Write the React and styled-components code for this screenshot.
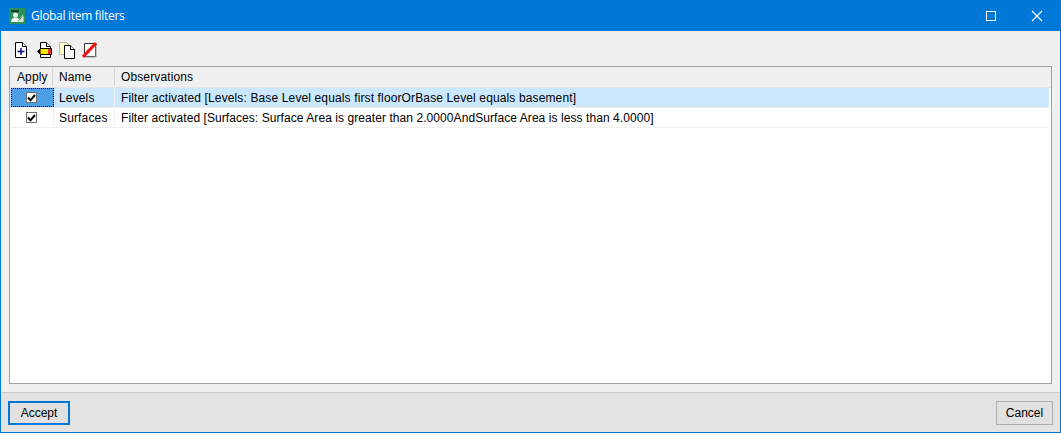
import React from 'react'
import styled, { createGlobalStyle } from 'styled-components'

const GlobalStyle = createGlobalStyle`
    html, body {
        margin: 0;
        padding: 0;
        background: #f0f0f0;
    }
    * {
        box-sizing: border-box;
    }
`

const rows = [
    {
        name: 'Levels',
        observations: 'Filter activated [Levels: Base Level equals first floorOrBase Level equals basement]',
        tracking: '0.13px',
        selected: true,
    },
    {
        name: 'Surfaces',
        observations: 'Filter activated [Surfaces: Surface Area is greater than 2.0000AndSurface Area is less than 4.0000]',
        tracking: '0.07px',
    },
]

const AppIcon = () => (
    <svg width="16" height="16" viewBox="0 0 16 16">
        <rect width="16" height="16" fill="#2a9458" />
        <path d="M2 2h8v2H2z" fill="#123f26" />
        <path d="M6 3l2 1v3H5z" fill="#123f26" />
        <circle cx="6.500" cy="7" r="2.500" fill="#f2f6f2" />
        <path d="M2 14c0-3 2-4.500 4.500-4.500S11 11 11 14z" fill="#f2f6f2" />
        <path d="M8 14l5.500-7 1 1V14z" fill="#dce8de" />
        <path d="M9.500 13l4-5" stroke="#5f8a6d" />
    </svg>
)

const NewIcon = () => (
    <svg width="12" height="16" viewBox="0 0 12 16">
        <path d="M.5 .5h7l4 4v11H.5z" fill="#fff" stroke="#000" />
        <path d="M7.500 .5v4h4" fill="#fff" stroke="#000" />
        <path d="M6 6v7M2.500 9.500h7" stroke="#00008b" strokeWidth="1.400" />
    </svg>
)

const EditIcon = () => (
    <svg width="16" height="16" viewBox="-1 0 16 16">
        <path d="M3.500 .5h6l4 4v11h-10z" fill="#fff" stroke="#000" />
        <path d="M9.500 .5v4h4" fill="#fff" stroke="#000" />
        <path d="M.5 9.500l3-3h11v6h-11z" fill="#ffe600" stroke="#000" />
        <path d="M.5 9.500l3-3v6z" fill="#000" />
        <path d="M11 7h3v5h-3z" fill="#e0362c" />
    </svg>
)

const CopyIcon = () => (
    <svg width="16" height="17" viewBox="0 0 16 17">
        <path d="M.5 .5h7l3 3v9H.5z" fill="#ffffc8" stroke="#808080" strokeDasharray="1 1" />
        <path d="M5.500 3.500h6l4 4v9h-10z" fill="#fff" stroke="#000" />
        <path d="M11.500 3.500v4h4" fill="#fff" stroke="#000" />
    </svg>
)

const DeleteIcon = () => (
    <svg width="15" height="16" viewBox="0 0 15 16">
        <path d="M2.500 1.500h11v13h-11z" fill="#fff" stroke="#333" />
        <path d="M14 2.500v12.500H3" fill="none" stroke="#999" />
        <path d="M1 15L14 1" stroke="#f01010" strokeWidth="3" />
    </svg>
)

const CheckMark = () => (
    <svg width="9" height="8" viewBox="0 0 9 8">
        <path d="M1 3.500l2.500 2.800L8 1" fill="none" stroke="#000" strokeWidth="2" />
    </svg>
)

const App = () => (
    <Window>
        <GlobalStyle />
        <TitleBar>
            <TitleIcon><AppIcon /></TitleIcon>
            <Title>Global item filters</Title>
            <WindowControls>
                <MinimizeGlyph />
                <MaximizeGlyph />
                <CloseGlyph>
                    <svg width="12" height="12" viewBox="0 0 12 12">
                        <path d="M1 1l10 10M11 1L1 11" stroke="#fff" strokeWidth="1.200" />
                    </svg>
                </CloseGlyph>
            </WindowControls>
        </TitleBar>
        <Toolbar>
            <ToolButton><NewIcon /></ToolButton>
            <ToolButton><EditIcon /></ToolButton>
            <ToolButton><CopyIcon /></ToolButton>
            <ToolButton><DeleteIcon /></ToolButton>
        </Toolbar>
        <TableBox>
            <HeaderRow>
                <HeaderCell $column="apply">Apply</HeaderCell>
                <HeaderCell $column="name">Name</HeaderCell>
                <HeaderCell>Observations</HeaderCell>
            </HeaderRow>
            {rows.map(row => (
                <Row key={row.name} $selected={row.selected}>
                    <CheckCell $selected={row.selected}>
                        <CheckBox><CheckMark /></CheckBox>
                    </CheckCell>
                    <Cell $column="name">{row.name}</Cell>
                    <Cell $tracking={row.tracking}>{row.observations}</Cell>
                </Row>
            ))}
        </TableBox>
        <Footer>
            <Button $primary>Accept</Button>
            <Button>Cancel</Button>
        </Footer>
    </Window>
)

const columnWidth = column => {
    if (column === 'apply') return '43px'
    if (column === 'name') return '62px'
    return 'auto'
}

const Window = styled.div`
    width: 1061px;
    height: 433px;
    display: flex;
    flex-direction: column;
    background: #f0f0f0;
    border: 1px solid #0078d7;
    border-top: 0;
    font-family: "Liberation Sans", Arial, sans-serif;
    font-size: 12px;
    color: #000;
    overflow: hidden;
`
const TitleBar = styled.div`
    height: 31px;
    flex: none;
    display: flex;
    align-items: center;
    padding-left: 8px;
    background: #0078d7;
    color: #fff;
`
const TitleIcon = styled.div`
    width: 16px;
    height: 16px;
    margin-right: 6px;
    display: flex;
`
const Title = styled.div`
    font-family: "Open Sans", "Noto Sans", sans-serif;
    font-size: 12px;
    letter-spacing: -0.3px;
`
const WindowControls = styled.div`
    margin-left: auto;
    display: flex;
    align-items: center;
`
const MinimizeGlyph = styled.div`
    width: 46px;
    height: 31px;
`
const MaximizeGlyph = styled.div`
    width: 10px;
    height: 10px;
    margin: 0 18px;
    border: 1px solid #fff;
`
const CloseGlyph = styled.div`
    width: 46px;
    display: flex;
    justify-content: center;
    padding-right: 1px;
`
const Toolbar = styled.div`
    height: 35px;
    flex: none;
    display: flex;
    align-items: center;
    padding: 3px 0 0 8px;
`
const ToolButton = styled.div`
    width: 23px;
    height: 23px;
    display: flex;
    align-items: center;
    justify-content: center;
`
const TableBox = styled.div`
    height: 318px;
    flex: none;
    margin: 0 8px;
    background: #fff;
    border: 1px solid #a0a0a0;
`
const HeaderRow = styled.div`
    display: flex;
    height: 21px;
    background: #f0f0f0;
    border-bottom: 1px solid #e5e5e5;
`
const HeaderCell = styled.div`
    width: ${props => columnWidth(props.$column)};
    flex: ${props => (props.$column ? 'none' : '1')};
    display: flex;
    align-items: center;
    padding-left: ${props => (props.$column === 'apply' ? '7px' : '6px')};
    border-right: ${props => (props.$column ? '1px solid #d5d5d5' : '0')};
    margin: 1px 0;
    letter-spacing: 0.12px;
`
const Row = styled.div`
    display: flex;
    height: 20px;
    margin-right: 2px;
    background: ${props => (props.$selected ? '#cce8ff' : '#fff')};
    border-bottom: 1px solid #f0f0f0;
`
const Cell = styled.div`
    width: ${props => columnWidth(props.$column)};
    flex: ${props => (props.$column ? 'none' : '1')};
    display: flex;
    align-items: center;
    padding-left: 6px;
    border-right: ${props => (props.$column ? '1px solid #f0f0f0' : '0')};
    white-space: nowrap;
    letter-spacing: ${props => props.$tracking || '0.15px'};
`
const CheckCell = styled.div`
    width: 43px;
    flex: none;
    margin-left: 1px;
    margin-right: -1px;
    padding-right: 2px;
    display: flex;
    align-items: center;
    justify-content: center;
    background: ${props => (props.$selected ? '#4d9fe6' : 'transparent')};
    outline: ${props => (props.$selected ? '1px dotted #000' : '0')};
    outline-offset: -1px;
    border-right: ${props => (props.$selected ? '0' : '1px solid #f0f0f0')};
`
const CheckBox = styled.div`
    width: 11px;
    height: 11px;
    display: flex;
    align-items: center;
    justify-content: center;
    background: #fff;
    border: 1px solid #707070;
`
const Footer = styled.div`
    flex: 1;
    margin-top: 8px;
    display: flex;
    align-items: center;
    justify-content: space-between;
    padding: 1px 7px 0;
    background: #e3e3e3;
    border-top: 1px solid #c8c8c8;
`
const Button = styled.button`
    height: 24px;
    width: ${props => (props.$primary ? '62px' : '57px')};
    padding: 0;
    font: inherit;
    color: #000;
    background: #e1e1e1;
    border: ${props => (props.$primary ? '2px solid #0078d7' : '1px solid #adadad')};
`

export default App
